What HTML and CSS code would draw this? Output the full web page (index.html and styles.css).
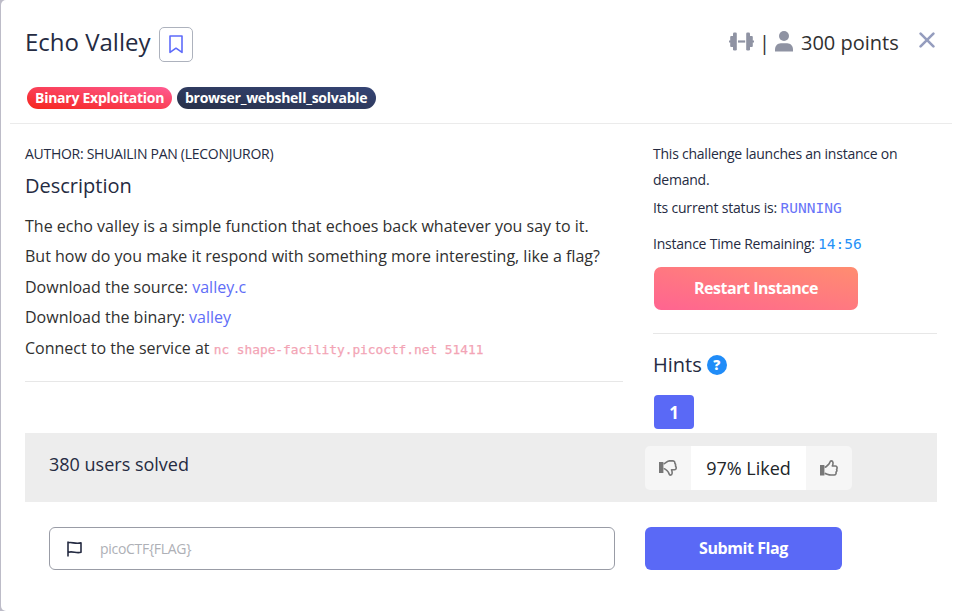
FILE: index.html
```html
<!DOCTYPE html>
<html lang="en">
<head>
<meta charset="utf-8">
<title>Echo Valley</title>
<link rel="stylesheet" href="styles.css">
</head>
<body>
<main class="modal">
  <header class="header">
    <div class="title-row">
      <h1 class="title">Echo Valley</h1>
      <button class="bookmark" aria-label="Bookmark">
        <svg width="14" height="19" viewBox="0 0 14 19"><path d="M1 1H13V17.4L7 13.2L1 17.4Z" fill="none" stroke="#5e6bfa" stroke-width="1.6" stroke-linejoin="round"/></svg>
      </button>
      <div class="points">
        <svg class="dumbbell" width="25" height="19" viewBox="0 0 25 19" fill="#8f93a3"><rect x="4" y=".5" width="3.8" height="18" rx="1.3"/><rect x="17.2" y=".5" width="3.8" height="18" rx="1.3"/><rect x="1.2" y="4" width="5" height="11" rx="1"/><rect x="18.8" y="4" width="5" height="11" rx="1"/><rect x="0" y="8.5" width="3" height="2"/><rect x="22" y="8.5" width="3" height="2"/><rect x="9" y="8.4" width="7.2" height="2.2"/></svg>
        <span class="bar">|</span>
        <svg class="user" width="18" height="21" viewBox="0 0 18 21" fill="#8f93a3"><circle cx="9" cy="5" r="5"/><path d="M0 20.5V18.5C0 15 2.5 12.2 5.8 12.2H12.2C15.5 12.2 18 15 18 18.5V20.5Z"/></svg>
        <span class="score">300 points</span>
      </div>
      <button class="close" aria-label="Close"><svg width="16" height="16" viewBox="0 0 16 16"><path d="M1.6 1.6L14.4 14.4M14.4 1.6L1.6 14.4" stroke="#959dbe" stroke-width="2.6" stroke-linecap="round"/></svg></button>
    </div>
    <div class="tags"><span class="tag red">Binary Exploitation</span><span class="tag navy">browser_webshell_solvable</span></div>
  </header>
  <div class="content">
    <section class="details">
      <p class="author">AUTHOR: SHUAILIN PAN (LECONJUROR)</p>
      <h2 class="section-title">Description</h2>
      <div class="description">
        <p>The echo valley is a simple function that echoes back whatever you say to it.</p>
        <p>But how do you make it respond with something more interesting, like a flag?</p>
        <p>Download the source: <a>valley.c</a></p>
        <p>Download the binary: <a>valley</a></p>
        <p>Connect to the service at <code>nc shape-facility.picoctf.net 51411</code></p>
      </div>
    </section>
    <aside class="side">
      <div class="instance">
        <p class="launch">This challenge launches an instance on demand.</p>
        <p class="status">Its current status is: <code>RUNNING</code></p>
        <p class="time">Instance Time Remaining: <code>14:56</code></p>
        <button class="restart">Restart Instance</button>
      </div>
      <div class="hints">
        <h2 class="hints-title">Hints <span class="help">?</span></h2>
        <button class="hint">1</button>
      </div>
    </aside>
  </div>
  <section class="solved">
    <span class="count">380 users solved</span>
    <div class="votes">
      <button class="vote" aria-label="Dislike"><svg width="18" height="16" viewBox="0 0 18 16"><rect x="0" y="2" width="4.4" height="11" fill="#777"/><path d="M4.6 4C7 3.2 8 .9 10.5 .9H13.6C15.2 .9 15.9 1.9 15.8 3.1C16.6 4 16.8 5 16.5 6C17.6 7.4 17.5 9.7 15.6 9.7H12.5C13.4 12 13.7 15.1 11.4 15.1C9.8 15.1 10.1 12.7 8.8 11.5C7.5 10.3 6.6 8.7 4.6 8.5" fill="none" stroke="#777" stroke-width="1.6" stroke-linejoin="round"/></svg></button>
      <span class="liked">97% Liked</span>
      <button class="vote" aria-label="Like"><svg width="18" height="16" viewBox="0 0 18 16"><rect x="0" y="5" width="4.4" height="10.5" fill="#777"/><path d="M4.6 7.4C6.6 7 7.5 5.3 8.8 4.1C10 3 9.7.9 11.2.9C13.5.9 13.3 3.8 12.3 6H15.5C17.3 6 17.4 8.3 16.6 9.4C17.1 10.5 16.8 11.6 16 12.2C16.4 13.8 15.7 15 14.2 15H11C8.6 15 7.2 14 4.6 13.4" fill="none" stroke="#777" stroke-width="1.6" stroke-linejoin="round"/></svg></button>
    </div>
  </section>
  <form class="submit-row">
    <label class="flag-field">
      <svg width="15" height="16" viewBox="0 0 15 16"><path d="M1 .5V15.5M1 1.8C5 .6 8 3.4 14 1.9V11.3C9 12.7 6 9.7 1 11.3" fill="none" stroke="#252b42" stroke-width="1.6" stroke-linejoin="round"/></svg>
      <input placeholder="picoCTF{FLAG}" aria-label="Flag">
    </label>
    <button class="submit" type="button">Submit Flag</button>
  </form>
</main>
</body>
</html>
```

FILE: styles.css
```css
* { box-sizing: border-box; }
body { margin: 0; background: #bdbcc8; font-family: "Open Sans", "Noto Sans", sans-serif; color: #252b42; }
h1, h2, p { margin: 0; font-weight: 400; }
button { border: 0; padding: 0; font-family: inherit; }
svg { display: block; flex: none; }
.modal { width: 960px; height: 611px; margin-left: 1px; background: #fff; border-radius: 5px 0 0 5px; overflow: hidden; }
.header { height: 124px; margin: 0 9px; border-bottom: 1px solid #ebebeb; padding: 27px 17px 0 15px; }
.title-row { display: flex; height: 35px; }
.title { width: 134px; font-size: 24px; line-height: 30px; white-space: nowrap; }
.bookmark { width: 34px; height: 35px; display: grid; place-items: center; background: #fff; border: 1px solid #adb2bd; border-radius: 5px; }
.points { margin-left: auto; display: flex; font-size: 20px; line-height: 31px; color: #303030; }
.dumbbell { margin-top: 5px; }
.bar { margin-left: 5px; width: 16px; }
.user { margin-top: 4px; }
.score { margin-left: 8px; width: 99px; white-space: nowrap; }
.close { margin: 5px 0 0 19px; width: 16px; height: 16px; background: none; }
.tags { display: flex; gap: 5px; margin: 25px 0 0 2px; }
.tag { height: 22px; border-radius: 11px; padding: 0 8px; color: #fff; font-size: 14px; font-weight: 700; line-height: 22px; letter-spacing: -.26px; white-space: nowrap; }
.red { width: 145px; background: linear-gradient(to top right, #f5251c, #ff5b93); }
.navy { width: 199px; background: linear-gradient(to top right, #283149, #354475); }
.content { display: grid; grid-template-columns: 598px 284px; column-gap: 30px; padding-left: 24px; height: 309px; }
.details { height: 258px; border-bottom: 1px solid #e7e7e7; }
.author { margin-top: 19px; font-size: 14px; line-height: 22px; letter-spacing: -.28px; }
.section-title { margin-top: 8px; font-size: 20px; line-height: 26px; }
.description { margin-top: 12px; font-size: 16px; line-height: 30.4px; color: #303030; white-space: nowrap; }
.description a { color: #606df7; }
.description code { font: 12.8px "DejaVu Sans Mono", monospace; color: #f3a4b5; -webkit-text-stroke: .25px #f3a4b5; }
.side { font-size: 14px; letter-spacing: -.23px; }
.side code, .side button, .hints { letter-spacing: 0; }
.instance { height: 210px; border-bottom: 1px solid #e7e7e7; padding-top: 17px; }
.launch { width: 275px; line-height: 26px; }
.status { margin-top: 2px; line-height: 26px; letter-spacing: -.19px; }
.status code { color: #6874f8; font: 14.5px "DejaVu Sans Mono", monospace; }
.time { margin-top: 10px; line-height: 26px; }
.time code { color: #2691f7; font: 14.5px "DejaVu Sans Mono", monospace; }
.restart { display: block; width: 204px; height: 43px; margin: 10px 0 0 1px; border-radius: 7px; background: linear-gradient(to top right, #ff6491, #ff8d70); color: #fff; font-size: 16px; line-height: 43px; font-weight: 700; }
.side .restart { letter-spacing: -.46px; }
.hints-title { display: flex; align-items: center; gap: 5px; margin-top: 17px; font-size: 20px; line-height: 28px; }
.help { display: grid; place-items: center; width: 20px; height: 20px; border-radius: 50%; background: #208cf8; color: #fff; font-size: 14px; font-weight: 800; line-height: 20px; }
.hint { width: 40px; height: 34px; margin: 16px 0 0 1px; border-radius: 4px; background: #5a69f6; color: #fff; font-size: 17px; font-weight: 700; }
.solved { display: flex; align-items: flex-start; width: 912px; height: 69px; margin-left: 24px; padding: 13px 24px 12px; background: #ededed; }
.count { width: 596px; font-size: 18px; line-height: 36px; }
.votes { display: flex; height: 44px; border-radius: 5px; overflow: hidden; }
.vote { width: 46px; display: grid; place-items: center; background: #f6f6f6; }
.liked { width: 115px; background: #fff; color: #212529; text-align: center; font-size: 18px; line-height: 44px; }
.submit-row { display: flex; gap: 30px; margin: 25px 0 0 48px; }
.flag-field { display: flex; align-items: center; width: 566px; height: 43px; padding-left: 17px; border: 1px solid #999ca6; border-radius: 6px; }
.flag-field input { width: 400px; margin-left: 18px; padding: 0; border: 0; outline: 0; background: none; font: 14px "Open Sans", sans-serif; letter-spacing: -.3px; }
.flag-field input::placeholder { color: #aeb0b6; opacity: 1; }
.submit { width: 197px; height: 43px; border-radius: 6px; background: #5a69f6; color: #fff; font-size: 16px; line-height: 43px; font-weight: 700; letter-spacing: -.42px; }
```
